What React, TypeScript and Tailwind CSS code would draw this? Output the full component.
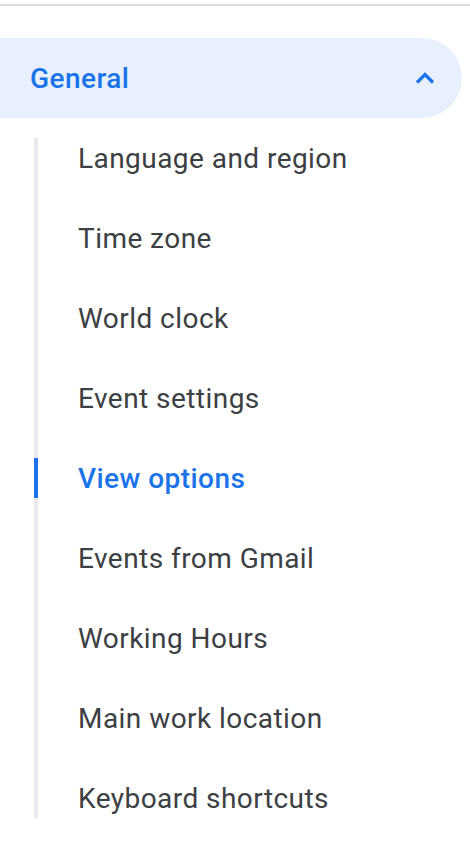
import React from 'react';

const items = [
  'Language and region',
  'Time zone',
  'World clock',
  'Event settings',
  'View options',
  'Events from Gmail',
  'Working Hours',
  'Main work location',
  'Keyboard shortcuts',
];

export default function App() {
  const active = 'View options';

  return (
    <div className="min-h-[842px] w-[470px] bg-white font-['Roboto',sans-serif]">
      <div className="pt-1">
        <div className="h-[2px] bg-[#dadce0]" />
      </div>

      {/* Section header */}
      <div className="mt-8 flex h-20 w-[462px] items-center justify-between rounded-r-full bg-[#e8f0fe] pl-[30px] pr-[26px]">
        <span className="pt-[2px] text-[28px] font-medium tracking-[0.45px] text-[#1a73e8]">General</span>
        <svg width="22" height="14" viewBox="0 0 22 14" fill="none">
          <path d="M3 11.5 L11 3.5 L19 11.5" stroke="#1a73e8" strokeWidth="3.2" />
        </svg>
      </div>

      {/* Sub items */}
      <div className="ml-[34px] mt-5 flex flex-col border-l-4 border-[#e8eaed]">
        <div className="-my-5 flex flex-col">
          {items.map((item) => (
            <div key={item} className="relative flex h-20 items-center pl-[40px] pt-[2px]">
              {item === active && (
                <span className="absolute -left-1 top-5 h-10 w-1 bg-[#1a73e8]" />
              )}
              <span
                className={
                  item === active
                    ? 'text-[28px] font-medium tracking-[0.45px] text-[#1a73e8]'
                    : 'text-[28px] tracking-[0.45px] text-[#3c4043]'
                }
              >
                {item}
              </span>
            </div>
          ))}
        </div>
      </div>
    </div>
  );
}
